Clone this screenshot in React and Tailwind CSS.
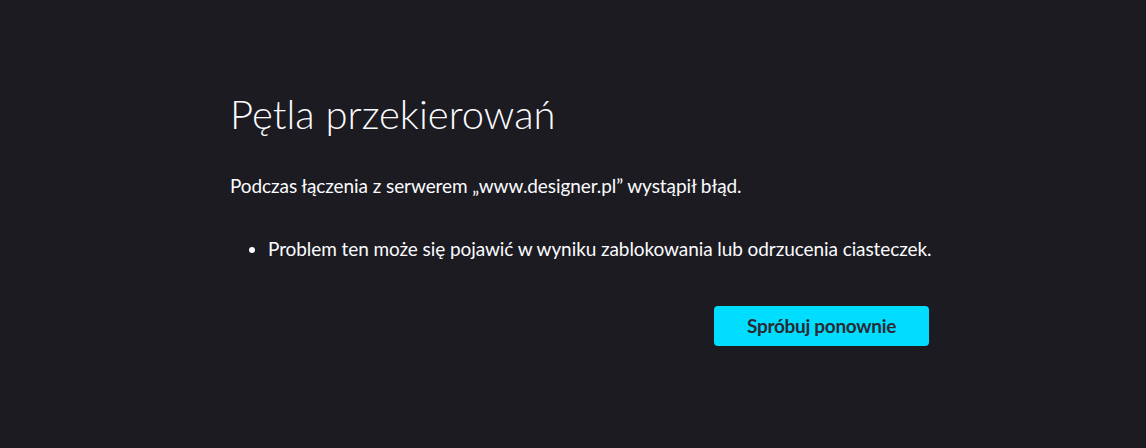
export default function App() {
  return (
    <div className="w-[1146px] h-[448px] bg-[#1c1b22] text-[#fbfbfe] overflow-hidden font-[Lato,'Open_Sans',sans-serif]">
      <div className="ml-[230px] w-[699px] pt-[88px]">
        <h1 className="text-[40px] leading-[52px] font-light">Pętla przekierowań</h1>
        <p className="mt-[33px] text-[19px] leading-[26px] tracking-[-0.08px]">
          Podczas łączenia z serwerem „www.designer.pl” wystąpił błąd.
        </p>
        <ul className="mt-[37px] ml-[38px] list-disc text-[19px] leading-[26px] tracking-[-0.08px]">
          <li className="whitespace-nowrap">Problem ten może się pojawić w wyniku zablokowania lub odrzucenia ciasteczek.</li>
        </ul>
        <div className="mt-[44px] flex justify-end">
          <button className="w-[215px] h-[40px] rounded-[4px] bg-[#00ddff] text-[#2b2a33] text-[19px] font-bold tracking-[-0.3px]">
            Spróbuj ponownie
          </button>
        </div>
      </div>
    </div>
  );
}
